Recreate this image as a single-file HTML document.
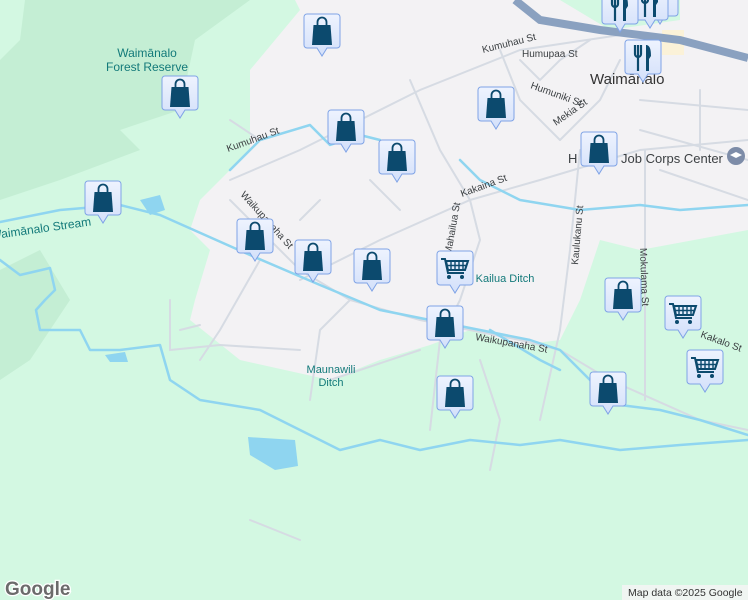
<!DOCTYPE html>
<html><head><meta charset="utf-8"><style>
html,body{margin:0;padding:0;width:748px;height:600px;overflow:hidden;background:#d3f8e2}
svg{display:block}
text{font-family:"Liberation Sans",sans-serif}
</style></head><body>
<svg width="748" height="600" viewBox="0 0 748 600" xmlns="http://www.w3.org/2000/svg">
<defs>
<linearGradient id="mg" x1="0" y1="0" x2="0" y2="1"><stop offset="0" stop-color="#eef3fe"/><stop offset="1" stop-color="#d3e0fa"/></linearGradient>
<g id="box"><path d="M3 0h30a3 3 0 0 1 3 3v28a3 3 0 0 1-3 3h-10l-5 8l-5-8h-10a3 3 0 0 1-3-3v-28a3 3 0 0 1 3-3z" fill="url(#mg)" stroke="#7fa3e6" stroke-width="1"/></g>
<g id="bag"><use href="#box"/><path d="M13.5 11v-3a4.5 4.5 0 0 1 9 0v3" fill="none" stroke="#0c4a6e" stroke-width="1.8"/><path d="M9.5 11h17l1.5 20h-20z" fill="#0c4a6e"/></g>
<g id="cart"><use href="#box"/><path d="M4 8h4l3 14h16" fill="none" stroke="#0c4a6e" stroke-width="2"/><path d="M9 10h22l-3 9h-17z" fill="none" stroke="#0c4a6e" stroke-width="2"/><path d="M14 10v9M18 10v9M22 10v9M26 10v9M10 14.5h20" stroke="#0c4a6e" stroke-width="1.4"/><circle cx="12" cy="26" r="2" fill="#0c4a6e"/><circle cx="25" cy="26" r="2" fill="#0c4a6e"/></g>
<g id="rest"><use href="#box"/><path d="M10 5v9a3 3 0 0 0 6 0v-9M13 5v26" fill="none" stroke="#0c4a6e" stroke-width="2.2"/><path d="M21 31v-26c4 0 5 5 5 11l-2 3v12z" fill="#0c4a6e"/></g>
</defs>
<path d="M0 0H250L195 40L180 110L120 130L140 150L60 180L0 200Z" fill="#c4eed4"/>
<path d="M0 270L40 250L70 300L30 360L0 380Z" fill="#c4eed4"/>
<path d="M0 0H25L20 40L0 60Z" fill="#d3f8e2"/>
<path d="M250 70L300 10L295 0H748V230L640 250L600 240L580 300L560 340L520 345L470 330L430 345L380 360L330 380L240 360L190 320L195 300L210 250L190 230L200 200L250 150Z" fill="#f3f2f4"/>
<path d="M560 0H680V20L610 30Z" fill="#d3f8e2"/>
<rect x="662" y="30" width="22" height="25" fill="#fbf2d8"/>
<g fill="none" stroke="#d6dbe3" stroke-width="2" stroke-linecap="round">
<path d="M230 180L300 150L420 90L520 50L620 35"/>
<path d="M300 280L380 240L470 200L540 180L640 150L748 140"/>
<path d="M230 200L300 270L350 300L420 320L520 340L560 350L610 380L700 420L748 430"/>
<path d="M410 80L440 150L470 200L480 240L460 300L440 340L430 430"/>
<path d="M580 150L570 250L560 330L540 420"/>
<path d="M645 150L645 400"/>
<path d="M500 50L520 100L560 140"/>
<path d="M620 60L600 100L560 140"/>
<path d="M590 40L560 60L540 80L520 60"/>
<path d="M640 100L748 110M640 130L748 160M700 90V150M660 170L748 200"/>
<path d="M350 300L320 330L310 400M260 260L220 330L200 360M330 380L420 350"/>
<path d="M300 220L320 200M370 180L400 210M230 120L260 140"/>
<path d="M170 300L170 350L220 345L300 350M180 330L200 325M250 520L300 540"/>
<path d="M480 360L500 420L490 470"/>
</g>
<path d="M515 0L540 20L600 30L680 40L748 58" fill="none" stroke="#8aa1c0" stroke-width="8"/>
<g fill="none" stroke="#8fd5f0" stroke-width="2.5" stroke-linecap="round" stroke-linejoin="round">
<path d="M0 222L60 210L120 205L160 215L250 255L320 285L380 310L430 320L480 330L530 340L560 350L590 380L620 405L660 410L700 420L748 435"/>
<path d="M0 260L20 275L50 268L55 290L45 300L36 310L40 330L80 330L90 350L120 350L160 345L170 380L200 400L260 410L300 430L340 450L380 440L420 450L470 440L520 445L560 440L620 450L680 445L748 440"/>
<path d="M230 170L260 140L310 125L330 145L360 135L380 140"/>
<path d="M460 160L480 180L520 200L580 210L640 205L680 210L748 205"/>
<path d="M490 330L540 360L560 370"/>
</g>
<path d="M140 200L160 195L165 210L150 215Z" fill="#8fd5f0"/>
<path d="M248 437L295 440L298 466L275 470L250 455Z" fill="#8fd5f0"/>
<path d="M105 355L125 352L128 362L110 362Z" fill="#8fd5f0"/>
<g font-size="12" fill="#137a7a" text-anchor="middle">
<text x="147" y="57">Waimānalo</text><text x="147" y="71">Forest Reserve</text>
<text x="505" y="282" font-size="11">Kailua Ditch</text>
<text x="331" y="373" font-size="11">Maunawili</text><text x="331" y="386" font-size="11">Ditch</text>
</g>
<text x="-10" y="234" font-size="12" fill="#137a7a" transform="rotate(-8 30 230)">Waimānalo Stream</text>
<text x="590" y="84" font-size="15" fill="#333">Waimānalo</text>
<text x="568" y="163" font-size="13" fill="#3c4043">H</text><text x="621" y="163" font-size="13" fill="#3c4043">Job Corps Center</text>
<circle cx="736" cy="156" r="9" fill="#7d8ca8"/><path d="M730 155l6-3 6 3-6 3z" fill="#fff"/>
<g font-size="10" fill="#3c4043">
<text x="483" y="53" transform="rotate(-14 483 53)">Kumuhau St</text>
<text x="522" y="57">Humupaa St</text>
<text x="530" y="88" transform="rotate(20 530 88)">Humuniki St</text>
<text x="556" y="126" transform="rotate(-35 556 126)">Mekia St</text>
<text x="228" y="152" transform="rotate(-20 228 152)">Kumuhau St</text>
<text x="462" y="197" transform="rotate(-20 462 197)">Kakaina St</text>
<text x="240" y="195" transform="rotate(48 240 195)">Waikupanaha St</text>
<text x="451" y="255" transform="rotate(-80 451 255)">Mahailua St</text>
<text x="578" y="265" transform="rotate(-85 578 265)">Kaulukanu St</text>
<text x="640" y="248" transform="rotate(88 640 248)">Mokulama St</text>
<text x="475" y="340" transform="rotate(10 475 340)">Waikupanaha St</text>
<text x="700" y="337" transform="rotate(20 700 337)">Kakalo St</text>
</g>
<use href="#bag" x="304" y="14"/>
<use href="#bag" x="162" y="76"/>
<use href="#bag" x="328" y="110"/>
<use href="#bag" x="478" y="87"/>
<use href="#bag" x="379" y="140"/>
<use href="#bag" x="581" y="132"/>
<use href="#bag" x="85" y="181"/>
<use href="#bag" x="237" y="219"/>
<use href="#bag" x="295" y="240"/>
<use href="#bag" x="354" y="249"/>
<use href="#cart" x="437" y="251"/>
<use href="#bag" x="427" y="306"/>
<use href="#bag" x="605" y="278"/>
<use href="#cart" x="665" y="296"/>
<use href="#cart" x="687" y="350"/>
<use href="#bag" x="437" y="376"/>
<use href="#bag" x="590" y="372"/>
<use href="#rest" x="642" y="-18"/>
<use href="#rest" x="632" y="-14"/>
<use href="#rest" x="602" y="-10"/>
<use href="#rest" x="625" y="40"/>
<text x="5" y="595" font-size="19" font-weight="bold" fill="#6b6b6b" stroke="#fff" stroke-width="2.5" paint-order="stroke">Google</text>
<rect x="622" y="585" width="126" height="15" fill="#f5f5f5" opacity="0.85"/>
<text x="628" y="596" font-size="10.5" fill="#333">Map data ©2025 Google</text>
</svg>
</body></html>
